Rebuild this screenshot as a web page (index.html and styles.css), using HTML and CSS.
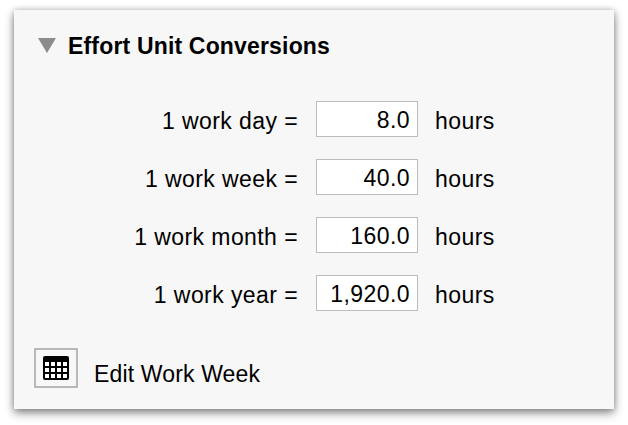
FILE: index.html
```html
<!DOCTYPE html>
<html lang="en">
<head>
<meta charset="utf-8">
<title>Effort Unit Conversions</title>
<link rel="stylesheet" href="styles.css">
</head>
<body>
<main class="panel">
  <header class="head">
    <svg class="disclosure" width="18" height="15" viewBox="0 0 18 15"><polygon points="0,0 18,0 9,15" fill="#8c8c8c"/></svg>
    <h1 class="title">Effort Unit Conversions</h1>
  </header>
  <section class="rows">
    <span class="label">1 work day =</span><span class="field">8.0</span><span class="unit">hours</span>
    <span class="label">1 work week =</span><span class="field">40.0</span><span class="unit">hours</span>
    <span class="label">1 work month =</span><span class="field">160.0</span><span class="unit">hours</span>
    <span class="label">1 work year =</span><span class="field">1,920.0</span><span class="unit">hours</span>
  </section>
  <footer class="foot">
    <span class="iconbtn">
      <svg width="26" height="24" viewBox="0 0 26 24"><rect width="26" height="24" rx="2" fill="#000"/><g fill="#fff"><rect x="2" y="6" width="4" height="4"/><rect x="8" y="6" width="4" height="4"/><rect x="14" y="6" width="4" height="4"/><rect x="20" y="6" width="4" height="4"/><rect x="2" y="12" width="4" height="4"/><rect x="8" y="12" width="4" height="4"/><rect x="14" y="12" width="4" height="4"/><rect x="20" y="12" width="4" height="4"/><rect x="2" y="18" width="4" height="4"/><rect x="8" y="18" width="4" height="4"/><rect x="14" y="18" width="4" height="4"/><rect x="20" y="18" width="4" height="4"/></g></svg>
    </span>
    <span class="link">Edit Work Week</span>
  </footer>
</main>
</body>
</html>
```

FILE: styles.css
```css
html, body {
  margin: 0;
  height: 100%;
  background: #fff;
}
body {
  padding: 10px 14px 16px;
  box-sizing: border-box;
  font-family: "Liberation Sans", Arial, sans-serif;
  color: #000;
  overflow: hidden;
}
.panel {
  width: 600px;
  height: 399px;
  background: #f7f7f7;
  box-shadow: 0 4px 9px rgba(0, 0, 0, 0.45), 0 0 6px rgba(0, 0, 0, 0.2);
  box-sizing: border-box;
  padding: 24px 0 0 20px;
}
.head {
  display: flex;
  align-items: center;
  height: 23px;
}
.disclosure {
  margin-left: 4px;
}
.title {
  margin: 1px 0 0 12px;
  font-size: 23px;
  font-weight: 700;
  line-height: 23px;
  letter-spacing: 0.17px;
}
.rows {
  display: grid;
  grid-template-columns: 282px 102px auto;
  grid-auto-rows: 36px;
  row-gap: 22px;
  align-items: center;
  margin-top: 44px;
  font-size: 23px;
  letter-spacing: 0.42px;
}
.label {
  text-align: right;
  margin-right: 18px;
  margin-top: 4px;
}
.field {
  height: 36px;
  box-sizing: border-box;
  border: 1px solid #bcbcbc;
  background: #fff;
  text-align: right;
  padding-right: 7px;
  line-height: 36px;
}
.unit {
  margin-left: 17px;
  margin-top: 4px;
}
.foot {
  display: flex;
  align-items: flex-start;
  margin-top: 37px;
  font-size: 23px;
  letter-spacing: 0.15px;
}
.iconbtn {
  width: 44px;
  height: 40px;
  box-sizing: border-box;
  border: 2px solid #b8b8b8;
  display: flex;
  align-items: center;
  justify-content: center;
}
.link {
  margin-left: 16px;
  margin-top: 13px;
}
```
